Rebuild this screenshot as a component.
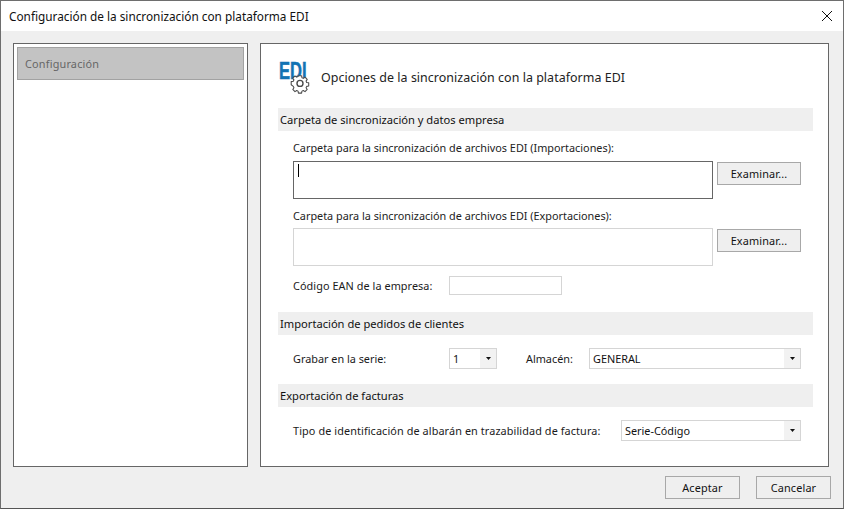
<div class="window">
  <header class="titlebar">
    <span class="title">Configuración de la sincronización con plataforma EDI</span>
    <svg class="close" width="12" height="12" viewBox="0 0 12 12"><path d="M1 1l10 10M11 1L1 11" stroke="#111" stroke-width="1" fill="none"/></svg>
  </header>

  <main class="body">
    <aside class="side">
      <div class="item">Configuración</div>
    </aside>

    <section class="panel">
      <div class="head">
        <div class="logo">
          <span class="edi">EDI</span>
          <svg class="gear" width="20" height="20" viewBox="0 0 20 20">
            <path d="M8.2 1.5h3.6l.4 2.3 1.6.7 1.9-1.3 2.5 2.5-1.3 1.9.7 1.6 2.3.4v0 3.6l-2.3.4-.7 1.6 1.3 1.9-2.5 2.5-1.9-1.3-1.6.7-.4 2.3H8.2l-.4-2.3-1.6-.7-1.9 1.3-2.5-2.5 1.3-1.9-.7-1.6L0 11.8V8.2l2.4-.4.7-1.6-1.3-1.9 2.5-2.5 1.9 1.3 1.6-.7z" transform="translate(1.2 .4) scale(.88)" fill="#fff" stroke="#4a4a4a" stroke-width="1.2" stroke-linejoin="round"/>
            <circle cx="10" cy="9.4" r="3" fill="none" stroke="#4a4a4a" stroke-width="1.4"/>
          </svg>
        </div>
        <h1>Opciones de la sincronización con la plataforma EDI</h1>
      </div>

      <div class="band first">Carpeta de sincronización y datos empresa</div>
      <div class="group">
        <div class="lbl lbl1">Carpeta para la sincronización de archivos EDI (Importaciones):</div>
        <div class="pathrow">
          <div class="field focus"><i class="caret"></i></div>
          <button>Examinar...</button>
        </div>
        <div class="lbl lbl2">Carpeta para la sincronización de archivos EDI (Exportaciones):</div>
        <div class="pathrow">
          <div class="field"></div>
          <button>Examinar...</button>
        </div>
        <div class="ean">
          <span class="lab156 wide">Código EAN de la empresa:</span>
          <div class="eanbox"></div>
        </div>
      </div>

      <div class="band b2">Importación de pedidos de clientes</div>
      <div class="row r1">
        <span class="lab156">Grabar en la serie:</span>
        <div class="combo c1"><span>1</span><b><svg width="5" height="3" viewBox="0 0 5 3"><path d="M0 0h5L2.5 3z" fill="#111"/></svg></b></div>
        <span class="alm">Almacén:</span>
        <div class="combo c2"><span>GENERAL</span><b><svg width="5" height="3" viewBox="0 0 5 3"><path d="M0 0h5L2.5 3z" fill="#111"/></svg></b></div>
      </div>

      <div class="band b3">Exportación de facturas</div>
      <div class="row r2">
        <span class="lab328">Tipo de identificación de albarán en trazabilidad de factura:</span>
        <div class="combo c3"><span>Serie-Código</span><b><svg width="5" height="3" viewBox="0 0 5 3"><path d="M0 0h5L2.5 3z" fill="#111"/></svg></b></div>
      </div>
    </section>
  </main>

  <footer class="foot">
    <button class="fb">Aceptar</button>
    <button class="fb">Cancelar</button>
  </footer>
</div>

<style>
  :global(body) { margin: 0; background: #efefef; }
  * { box-sizing: border-box; }
  .window {
    width: 844px; height: 509px; background: #efefef;
    border: 1px solid #6e6e6e; border-bottom-color: #555;
    display: flex; flex-direction: column;
    font-family: "Noto Sans", "Open Sans", sans-serif;
    font-size: 10.85px; color: #1a1a1a; overflow: hidden;
  }
  .titlebar {
    height: 30px; background: #fff; flex: none;
    display: flex; align-items: center; justify-content: space-between;
    padding: 0 10px 0 8px;
  }
  .title { font-size: 11.8px; color: #111; }
  .body { display: flex; gap: 12px; padding: 12px 14px 0 12px; flex: none; }
  .side, .panel { height: 424px; background: #fff; border: 1px solid #666; }
  .side { width: 235px; padding: 3px; }
  .item {
    height: 33px; background: #c3c3c3; border: 1px solid #a2a2a2;
    color: #666; padding-left: 7px; display: flex; align-items: center;
    letter-spacing: .2px;
  }
  .panel { width: 569px; padding: 16px 15px 0 17px; }
  .head { display: flex; height: 32px; align-items: flex-start; }
  .logo { position: relative; width: 43px; height: 34px; }
  .edi {
    position: absolute; left: 1px; top: 1px;
    font: 700 23px/20px "Liberation Sans", sans-serif;
    letter-spacing: 0; color: #1273b4;
    -webkit-text-stroke: .5px #1273b4;
    transform: scaleX(.72); transform-origin: left center;
  }
  .gear { position: absolute; left: 12px; top: 14px; }
  h1 { margin: 10px 0 0; font-size: 12.45px; font-weight: 400; line-height: 16px; color: #222; letter-spacing: .04px; }
  .band {
    height: 23px; background: #efefef; display: flex; align-items: center;
    padding: 0 0 1px 2px; font-size: 11.15px; color: #111;
  }
  .first { margin-top: 16px; }
  .b2 { margin-top: 17px; }
  .b3 { margin-top: 15px; }
  .group { padding-left: 15px; }
  .lbl { line-height: 14px; color: #222; }
  .lbl1 { margin-top: 10px; }
  .lbl2 { margin-top: 10px; }
  .pathrow { display: flex; gap: 4px; margin-top: 6px; align-items: flex-start; }
  .field {
    width: 420px; height: 38px; background: #fff; border: 1px solid #d5d5d5; position: relative;
  }
  .lbl2 + .pathrow { margin-top: 5px; }
  .focus { border-color: #666; }
  .caret { position: absolute; left: 4px; top: 2px; width: 1px; height: 13px; background: #000; }
  button {
    font: inherit; color: #111; background: #efefef; border: 1px solid #a8a8a8;
    width: 84px; height: 23px; padding: 0; margin-top: 1px; letter-spacing: .15px;
  }
  .ean { display: flex; align-items: center; margin-top: 10px; }
  .lab156 { width: 156px; flex: none; }
  .wide { letter-spacing: .07px; }
  .eanbox { width: 113px; height: 19px; background: #fff; border: 1px solid #d5d5d5; }
  .row { display: flex; align-items: center; margin-left: 15px; }
  .r1 { margin-top: 13px; }
  .r2 { margin-top: 13px; }
  .alm { width: 63px; margin-left: 29px; }
  .lab328 { width: 328px; flex: none; letter-spacing: .1px; }
  .combo {
    height: 21px; background: #fff; border: 1px solid #d5d5d5;
    display: flex; justify-content: space-between; align-items: stretch;
  }
  .combo span { padding-left: 3px; display: flex; align-items: center; color: #111; }
  .combo b { width: 16px; background: #f2f2f2; display: flex; align-items: center; justify-content: center; }
  .c1 { width: 48px; }
  .c2 { width: 212px; }
  .c3 { width: 180px; }
  .foot { display: flex; justify-content: flex-end; gap: 16px; padding: 9px 12px 0 0; }
  .fb { width: 75px; margin: 0; }
</style>
